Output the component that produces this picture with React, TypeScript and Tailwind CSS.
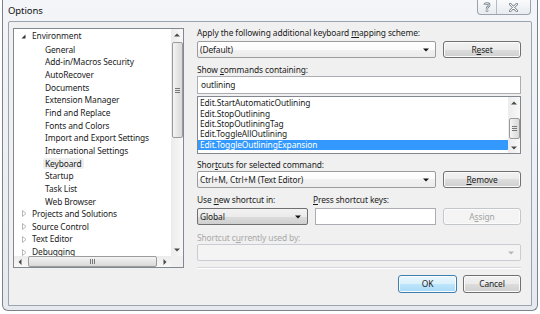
import type { ReactNode } from 'react';

type Dir = 'up' | 'down' | 'left' | 'right';

// small scrollbar / combo arrows
function Arrow({ dir, color = '#4a4a4a' }: { dir: Dir; color?: string }) {
  if (dir === 'up' || dir === 'down') {
    const d = dir === 'up' ? 'M0 3.5L3 0.5L6 3.5Z' : 'M0 0.5L3 3.5L6 0.5Z';
    return (
      <svg width="6" height="4" viewBox="0 0 6 4">
        <path d={d} fill={color} />
      </svg>
    );
  }
  const d = dir === 'left' ? 'M3.5 0L0.5 3L3.5 6Z' : 'M0.5 0L3.5 3L0.5 6Z';
  return (
    <svg width="4" height="6" viewBox="0 0 4 6">
      <path d={d} fill={color} />
    </svg>
  );
}

function Mn({ children }: { children: ReactNode }) {
  return <span className="underline decoration-[0.5px] underline-offset-[1px]">{children}</span>;
}

function Button({
  children,
  variant = 'normal',
  className = '',
}: {
  children: ReactNode;
  variant?: 'normal' | 'default' | 'disabled';
  className?: string;
}) {
  const look =
    variant === 'default'
      ? 'border-[#3c7fb1] bg-[linear-gradient(#eaf6fd,#d9f0fc_50%,#bee6fd_50%,#a7d9f5)] text-[#1b1b1b]'
      : variant === 'disabled'
        ? 'border-[#c3c7ca] bg-[#f4f4f4] text-[#a3a3a3]'
        : 'border-[#707070] bg-[linear-gradient(#f2f2f2,#ebebeb_50%,#dddddd_50%,#cfcfcf)] text-[#1b1b1b]';
  return (
    <div
      className={`flex items-center justify-center rounded-[3px] border shadow-[inset_0_0_0_1px_#fbfbfb] ${look} ${className}`}>
      {children}
    </div>
  );
}

function Combo({
  children,
  variant = 'white',
  className = '',
}: {
  children?: ReactNode;
  variant?: 'white' | 'gray' | 'disabled';
  className?: string;
}) {
  const look =
    variant === 'gray'
      ? 'border-[#707070] bg-[linear-gradient(#f2f2f2,#ebebeb_50%,#dddddd_50%,#cfcfcf)]'
      : variant === 'disabled'
        ? 'border-[#c9cdd1] bg-[#f4f4f4]'
        : 'border-[#9c9c9c] bg-[linear-gradient(#ffffff,#fbfbfb_50%,#f1f1f1_50%,#ececec)]';
  return (
    <div className={`flex items-center rounded-[2px] border pl-[2px] pr-[6px] ${look} ${className}`}>
      <span className="flex-1 truncate">{children}</span>
      <Arrow dir="down" color={variant === 'disabled' ? '#b5b5b5' : '#111'} />
    </div>
  );
}

function Thumb({ vertical, className = '' }: { vertical: boolean; className?: string }) {
  return (
    <div
      className={`flex items-center justify-center rounded-[2px] border border-[#9b9b9b] ${
        vertical
          ? 'flex-col gap-[1px] bg-[linear-gradient(to_right,#f4f4f4,#e6e6e6_50%,#d9d9d9)]'
          : 'gap-[1px] bg-[linear-gradient(#f4f4f4,#e6e6e6_50%,#d9d9d9)]'
      } ${className}`}>
      {[0, 1, 2].map(i => (
        <div key={i} className={vertical ? 'h-[1px] w-[5px] bg-[#777]' : 'h-[5px] w-[1px] bg-[#777]'} />
      ))}
    </div>
  );
}

function TreeScrollV() {
  return (
    <div className="flex flex-col items-center bg-[linear-gradient(to_right,#ececec,#f8f8f8)]">
      <div className="flex h-[12px] items-center">
        <Arrow dir="up" />
      </div>
      <Thumb vertical className="mt-[1px] h-[96px] w-[11px]" />
      <div className="flex-1" />
      <div className="flex h-[12px] items-center">
        <Arrow dir="down" />
      </div>
    </div>
  );
}

function TreeScrollH() {
  return (
    <div className="flex items-center bg-[linear-gradient(#ececec,#f8f8f8)]">
      <div className="flex w-[12px] justify-center">
        <Arrow dir="left" />
      </div>
      <Thumb vertical={false} className="ml-[2px] h-[11px] w-[129px]" />
      <div className="flex-1" />
      <div className="flex w-[12px] justify-center">
        <Arrow dir="right" />
      </div>
    </div>
  );
}

const envChildren = [
  'General',
  'Add-in/Macros Security',
  'AutoRecover',
  'Documents',
  'Extension Manager',
  'Find and Replace',
  'Fonts and Colors',
  'Import and Export Settings',
  'International Settings',
  'Keyboard',
  'Startup',
  'Task List',
  'Web Browser',
];

const collapsedNodes = ['Projects and Solutions', 'Source Control', 'Text Editor', 'Debugging'];

function Tree() {
  return (
    <div className="mt-[1px] grid h-[240px] w-[171px] grid-cols-[157px_12px] grid-rows-[227px_11px] border border-[#828790] bg-white">
      <div className="overflow-hidden pt-[1px]">
        {/* expanded node */}
        <div className="flex h-[12.7px] items-center pl-[7px]">
          <span className="flex w-[11px]">
            <svg width="5" height="5" viewBox="0 0 5 5">
              <path d="M4.5 0.5V4.5H0.5Z" fill="#333" />
            </svg>
          </span>
          <span>Environment</span>
        </div>
        {envChildren.map(name => (
          <div key={name} className="flex h-[12.7px] items-center pl-[29px]">
            <span className={`px-[2px] leading-[11px] ${name === 'Keyboard' ? 'rounded-[2px] bg-[#eeeeee]' : ''}`}>
              {name}
            </span>
          </div>
        ))}
        {collapsedNodes.map(name => (
          <div key={name} className="flex h-[12.7px] items-center pl-[8px]">
            <span className="flex w-[10px]">
              <svg width="5" height="7" viewBox="0 0 5 7">
                <path d="M0.5 0.5L4 3.5L0.5 6.5Z" fill="#fff" stroke="#a6a6a6" strokeWidth="0.8" />
              </svg>
            </span>
            <span>{name}</span>
          </div>
        ))}
      </div>
      <TreeScrollV />
      <TreeScrollH />
      <div className="bg-[#f0f0f0]" />
    </div>
  );
}

const commands = [
  'Edit.StartAutomaticOutlining',
  'Edit.StopOutlining',
  'Edit.StopOutliningTag',
  'Edit.ToggleAllOutlining',
  'Edit.ToggleOutliningExpansion',
];

function CommandList() {
  return (
    <div className="mt-[2px] flex h-[58px] border border-[#828790] bg-white">
      <div className="flex-1 pt-[1px]">
        {commands.map((c, i) => (
          <div
            key={c}
            className={`flex h-[10.4px] items-center pl-[2px] leading-[10px] ${i === 4 ? 'bg-[#3399ff] text-white' : ''}`}>
            {c}
          </div>
        ))}
      </div>
      {/* list scrollbar */}
      <div className="flex w-[12px] flex-col items-center bg-[linear-gradient(to_right,#ececec,#f8f8f8)]">
        <div className="flex h-[11px] items-center">
          <Arrow dir="up" />
        </div>
        <Thumb vertical className="mt-[10px] h-[21px] w-[11px]" />
        <div className="flex-1" />
        <div className="flex h-[11px] items-center">
          <Arrow dir="down" />
        </div>
      </div>
    </div>
  );
}

function RightPane() {
  return (
    <div className="ml-[13px] flex w-[324px] flex-col">
      <div className="h-[12px] leading-[12px]">
        Apply the following additional keyboard <Mn>m</Mn>apping scheme:
      </div>
      <div className="mt-[2px] flex h-[17px] gap-[7px]">
        <Combo className="w-[239px]">(Default)</Combo>
        <Button className="flex-1">
          R<Mn>e</Mn>set
        </Button>
      </div>

      <div className="mt-[6px] h-[12px] leading-[12px]">
        Show <Mn>c</Mn>ommands containing:
      </div>
      <div className="flex h-[18px] items-center border border-[#abadb3] bg-white pl-[3px]">outlining</div>
      <CommandList />

      <div className="mt-[5px] h-[12px] leading-[12px]">
        Shor<Mn>t</Mn>cuts for selected command:
      </div>
      <div className="flex h-[17px] gap-[7px]">
        <Combo className="w-[239px]">Ctrl+M, Ctrl+M (Text Editor)</Combo>
        <Button className="flex-1">
          <Mn>R</Mn>emove
        </Button>
      </div>

      <div className="mt-[6px] flex h-[12px] leading-[12px]">
        <span className="w-[116px]">
          Use <Mn>n</Mn>ew shortcut in:
        </span>
        <span>
          <Mn>P</Mn>ress shortcut keys:
        </span>
      </div>
      <div className="mt-[2px] flex h-[17px]">
        <Combo variant="gray" className="w-[111px]">
          Global
        </Combo>
        <div className="ml-[7px] w-[121px] border border-[#abadb3] bg-white" />
        <Button variant="disabled" className="ml-[7px] flex-1">
          A<span className="underline decoration-[0.5px] underline-offset-[1px]">s</span>sign
        </Button>
      </div>

      <div className="mt-[7px] h-[12px] leading-[12px] text-[#a8a8a8]">
        Shortcut c<Mn>u</Mn>rrently used by:
      </div>
      <Combo variant="disabled" className="h-[17px]" />

      {/* separator */}
      <div className="mt-[6px] h-[1px] bg-[#d5d9dd]" />
      <div className="h-[1px] bg-white" />

      <div className="mt-[6px] flex justify-end gap-[6px]">
        <Button variant="default" className="h-[18px] w-[59px]">
          OK
        </Button>
        <Button className="h-[18px] w-[58px]">Cancel</Button>
      </div>
    </div>
  );
}

function TitleBar() {
  return (
    <div className="flex h-[21px] items-start justify-between">
      <span className="pt-[5px] text-[9.5px] leading-[12px] tracking-[-0.1px] text-[#111]">Options</span>
      {/* help / close caption buttons */}
      <div className="mr-[1px] flex h-[15px] rounded-b-[4px] border border-t-0 border-[#9aa3ad] bg-[linear-gradient(#f9fafb,#e8ecf0)]">
        <div className="flex w-[19px] items-center justify-center border-r border-[#b3bbc3]">
          <svg width="8" height="10" viewBox="0 0 8 10">
            <path d="M1.8 3C1.8 0.8 6.2 0.8 6.2 3C6.2 4.6 4 4.6 4 6.3V6.8" fill="none" stroke="#6d7782" strokeWidth="2.4" />
            <path d="M1.8 3C1.8 0.8 6.2 0.8 6.2 3C6.2 4.6 4 4.6 4 6.3V6.8" fill="none" stroke="#fff" strokeWidth="0.9" />
            <circle cx="4" cy="8.7" r="1.1" fill="#fff" stroke="#6d7782" strokeWidth="0.7" />
          </svg>
        </div>
        <div className="flex w-[33px] items-center justify-center">
          <svg width="9" height="9" viewBox="0 0 9 9">
            <path d="M1.2 1.2L7.8 7.8M7.8 1.2L1.2 7.8" stroke="#6d7782" strokeWidth="2.6" strokeLinecap="round" />
            <path d="M1.2 1.2L7.8 7.8M7.8 1.2L1.2 7.8" stroke="#fff" strokeWidth="1.1" strokeLinecap="round" />
          </svg>
        </div>
      </div>
    </div>
  );
}

export default function App() {
  return (
    <div className="h-[314px] w-[540px] overflow-hidden bg-white font-['Noto_Sans',sans-serif] text-[8.4px] leading-[12px] tracking-[-0.1px] text-[#1b1b1b]">
      {/* window frame */}
      <div className="ml-[2px] flex h-[311px] w-[536px] flex-col rounded-b-[6px] border border-t-0 border-[#7a838c] bg-[linear-gradient(#f3f5f8,#e6eaef)] px-[5px]">
        <TitleBar />
        <div className="flex h-[285px] rounded-t-[2px] border border-[#9aa4ae] bg-[#f0f0f0] pl-[4px] pt-[5px]">
          <Tree />
          <RightPane />
        </div>
      </div>
    </div>
  );
}
